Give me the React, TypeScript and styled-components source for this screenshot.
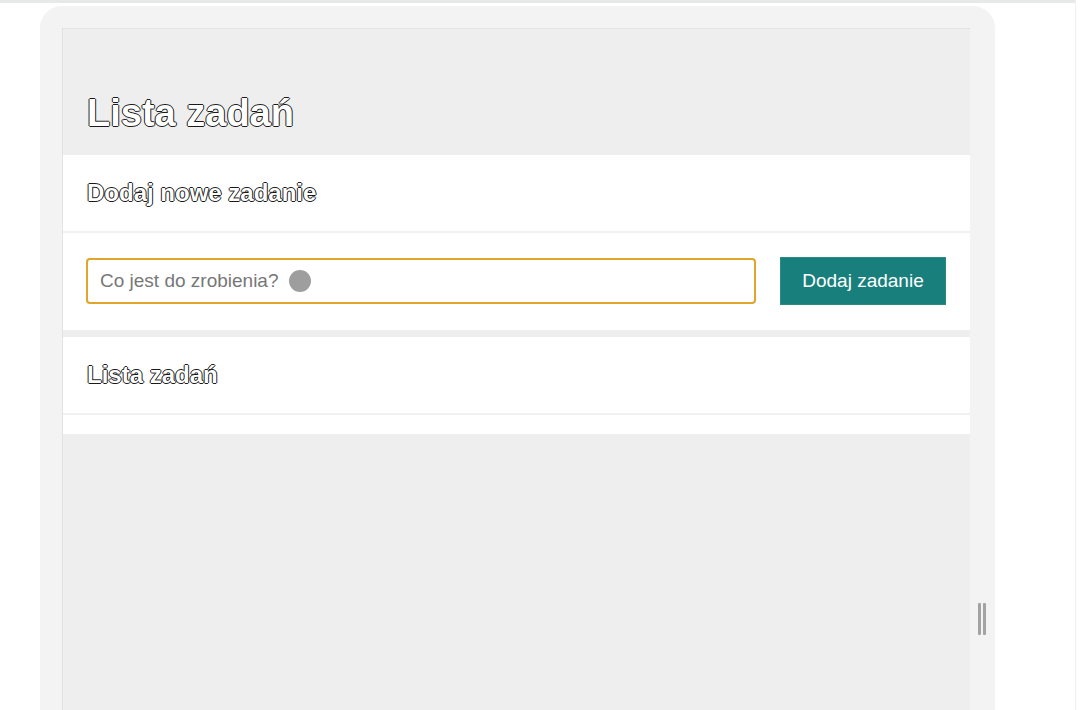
import React from "react";
import styled, { createGlobalStyle } from "styled-components";

const GlobalStyle = createGlobalStyle`
  html, body {
    margin: 0;
    padding: 0;
    background: #ffffff;
    overflow: hidden;
  }

  body {
    font-family: "Liberation Sans", Arial, Helvetica, sans-serif;
  }

  * {
    box-sizing: border-box;
  }
`;

const Page = styled.div`
  height: 710px;
  display: flex;
  flex-direction: column;
  border-right: 1px solid #f0f0f0;
  margin-right: 4px;
`;

const TopStrip = styled.div`
  height: 3px;
  background: #e7e8e8;
  flex-shrink: 0;
`;

const Frame = styled.div`
  flex: 1;
  display: flex;
  width: 955px;
  margin: 3px 0 0 40px;
  padding-top: 22px;
  background: #f2f3f2;
  border-radius: 22px 22px 0 0;
`;

const Gutter = styled.div`
  width: 22px;
  flex-shrink: 0;
`;

const Panel = styled.div`
  width: 908px;
  flex-shrink: 0;
  display: flex;
  flex-direction: column;
  gap: 7px;
  background: #eeeeee;
  border-top: 1px solid #e1e2e2;
  border-left: 1px solid #e1e2e2;
`;

const GripColumn = styled.div`
  flex: 1;
  padding: 575px 0 0 8px;
`;

const Grip = styled.div`
  display: flex;
  gap: 2px;
  height: 32px;
`;

const GripBar = styled.span`
  width: 3px;
  height: 100%;
  background: #a3a3a3;
  border-radius: 1px;
`;

// white letters with a thin dark outline
const Outlined = `
  color: #ffffff;
  font-weight: 700;
  margin: 0;
  text-shadow:
    1px 0 0 #1a1a1a,
    -1px 0 0 #1a1a1a,
    0 1px 0 #1a1a1a,
    0 -1px 0 #1a1a1a;
`;

const Title = styled.h1`
  ${Outlined}
  font-size: 38px;
  line-height: 44px;
  padding: 62px 0 20px 24px;
`;

const Card = styled.section`
  background: #ffffff;
  display: flex;
  flex-direction: column;
`;

const CardHeader = styled.div`
  padding: 0 24px;
  height: 78px;
  display: flex;
  align-items: center;
  border-bottom: 2px solid #f1f1f1;
`;

const CardTitle = styled.h2`
  ${Outlined}
  font-size: 24px;
  line-height: 28px;
`;

const CardBody = styled.div<{ $empty?: boolean }>`
  display: flex;
  align-items: center;
  gap: 24px;
  padding: ${({ $empty }) => ($empty ? "0" : "24px 24px 25px 23px")};
  height: ${({ $empty }) => ($empty ? "19px" : "auto")};
`;

const InputBox = styled.div`
  flex: 1;
  height: 46px;
  display: flex;
  align-items: center;
  gap: 10px;
  padding: 0 12px;
  border: 2px solid #e2a52c;
  border-radius: 4px;
  background: #ffffff;
`;

const Placeholder = styled.span`
  font-size: 19px;
  color: #777777;
`;

const Bubble = styled.span`
  width: 22px;
  height: 22px;
  border-radius: 50%;
  background: #9e9e9e;
`;

const AddButton = styled.button`
  width: 166px;
  height: 48px;
  border: 1px solid #2a8a87;
  background: #187f7c;
  color: #ffffff;
  font-family: "Liberation Sans", Arial, Helvetica, sans-serif;
  font-size: 19px;
  padding: 0;
  flex-shrink: 0;
`;

export default function App() {
  return (
    <>
      <GlobalStyle />
      <Page>
        <TopStrip />
        <Frame>
          <Gutter />
          <Panel>
            <div>
              <Title>Lista zadań</Title>
              <Card>
                <CardHeader>
                  <CardTitle>Dodaj nowe zadanie</CardTitle>
                </CardHeader>
                <CardBody>
                  <InputBox>
                    <Placeholder>Co jest do zrobienia?</Placeholder>
                    <Bubble />
                  </InputBox>
                  <AddButton>Dodaj zadanie</AddButton>
                </CardBody>
              </Card>
            </div>
            <Card>
              <CardHeader>
                <CardTitle>Lista zadań</CardTitle>
              </CardHeader>
              <CardBody $empty />
            </Card>
          </Panel>
          <GripColumn>
            <Grip>
              <GripBar />
              <GripBar />
            </Grip>
          </GripColumn>
        </Frame>
      </Page>
    </>
  );
}
